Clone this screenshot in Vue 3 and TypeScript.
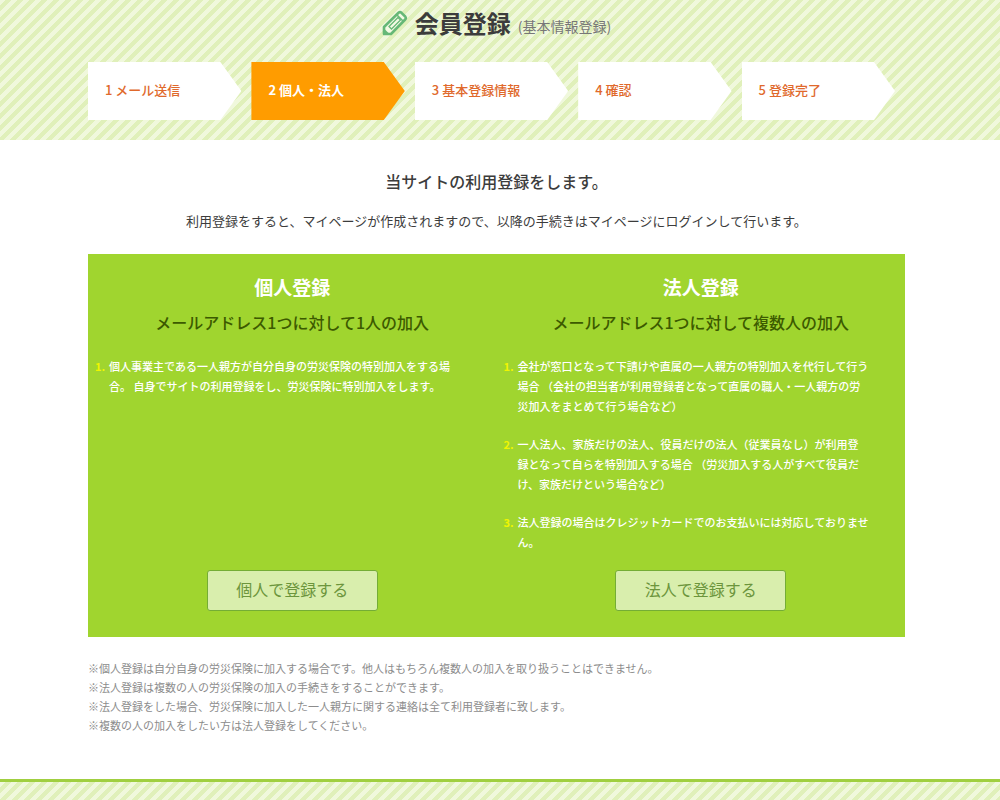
<script setup lang="ts">
interface Step {
  no: number
  label: string
}
interface Plan {
  title: string
  summary: string
  notes: string[]
  action: string
}

const current = 2
const steps: Step[] = [
  { no: 1, label: 'メール送信' },
  { no: 2, label: '個人・法人' },
  { no: 3, label: '基本登録情報' },
  { no: 4, label: '確認' },
  { no: 5, label: '登録完了' },
]

const plans: Plan[] = [
  {
    title: '個人登録',
    summary: 'メールアドレス1つに対して1人の加入',
    notes: [
      '個人事業主である一人親方が自分自身の労災保険の特別加入をする場\n合。 自身でサイトの利用登録をし、労災保険に特別加入をします。',
    ],
    action: '個人で登録する',
  },
  {
    title: '法人登録',
    summary: 'メールアドレス1つに対して複数人の加入',
    notes: [
      '会社が窓口となって下請けや直属の一人親方の特別加入を代行して行う\n場合 （会社の担当者が利用登録者となって直属の職人・一人親方の労\n災加入をまとめて行う場合など）',
      '一人法人、家族だけの法人、役員だけの法人（従業員なし）が利用登\n録となって自らを特別加入する場合 （労災加入する人がすべて役員だ\nけ、家族だけという場合など）',
      '法人登録の場合はクレジットカードでのお支払いには対応しておりませ\nん。',
    ],
    action: '法人で登録する',
  },
]

const remarks: string[] = [
  '※個人登録は自分自身の労災保険に加入する場合です。他人はもちろん複数人の加入を取り扱うことはできません。',
  '※法人登録は複数の人の労災保険の加入の手続きをすることができます。',
  '※法人登録をした場合、労災保険に加入した一人親方に関する連絡は全て利用登録者に致します。',
  '※複数の人の加入をしたい方は法人登録をしてください。',
]
</script>

<template>
  <div class="page">
    <header class="hero striped">
      <h1 class="title">
        <svg class="pencil" viewBox="0 0 26 26" aria-hidden="true">
          <path d="M2 24V17L16.500 2.800Q18 1.500 19.500 2.800L23.200 6.500Q24.500 8 23.200 9.500L9 24Z" fill="#f3fae4" stroke="#66b877" stroke-width="2.600" stroke-linejoin="round" />
          <path d="M2 18.500L7.500 24H2Z" fill="#66b877" />
          <path d="M7 16.500L9.500 19L18.500 10L16 7.500Z" fill="none" stroke="#66b877" stroke-width="1.300" />
          <path d="M15 5L21 11" fill="none" stroke="#66b877" stroke-width="1.600" />
        </svg>
        <span>会員登録</span>
        <small>(基本情報登録)</small>
      </h1>
      <ol class="steps">
        <li v-for="s in steps" :key="s.no" class="step" :class="{ active: s.no === current }">
          {{ s.no }} {{ s.label }}
        </li>
      </ol>
    </header>

    <main class="content">
      <h2 class="lead">当サイトの利用登録をします。</h2>
      <p class="intro">利用登録をすると、マイページが作成されますので、以降の手続きはマイページにログインして行います。</p>

      <div class="plans">
        <section v-for="p in plans" :key="p.title" class="plan">
          <h3>{{ p.title }}</h3>
          <p class="summary">{{ p.summary }}</p>
          <ol class="notes">
            <li v-for="(n, i) in p.notes" :key="i">
              <span class="num">{{ i + 1 }}.</span>
              <span class="note">{{ n }}</span>
            </li>
          </ol>
          <button type="button">{{ p.action }}</button>
        </section>
      </div>

      <div class="remarks">
        <p v-for="r in remarks" :key="r">{{ r }}</p>
      </div>
    </main>

    <footer class="footer striped"></footer>
  </div>
</template>

<style>
body {
  background: #fff;
}
</style>

<style scoped>
.page {
  display: flex;
  flex-direction: column;
  min-height: 100vh;
  overflow: hidden;
  font-family: "Noto Sans CJK JP", sans-serif;
  font-size: 13px;
  color: #3c3c3c;
}
h1, h2, h3, p, ol {
  margin: 0;
  padding: 0;
}
ol {
  list-style: none;
}
.striped {
  background: linear-gradient(135deg, #f0f8dc 25%, #e0f0ba 25% 50%, #f0f8dc 50% 75%, #e0f0ba 75%) 0 0 / 12px 12px;
}
.hero {
  padding: 4px 95px 20px 88px;
}
.title {
  display: flex;
  justify-content: center;
  align-items: center;
  height: 38px;
  margin-bottom: 20px;
  font-size: 24px;
  line-height: 38px;
  font-weight: 700;
}
.pencil {
  width: 26px;
  height: 26px;
  margin-right: 7px;
}
.title small {
  margin: 6px 0 0 7px;
  font-size: 14px;
  line-height: 20px;
  font-weight: 400;
  color: #777;
}
.steps {
  display: grid;
  grid-template-columns: repeat(5, 1fr);
}
.step {
  height: 58px;
  margin-right: 10px;
  padding: 0 17px;
  box-sizing: border-box;
  line-height: 56px;
  font-weight: 500;
  color: #e0692c;
  background: #fff;
  clip-path: polygon(0 0, calc(100% - 21px) 0, 100% 50%, calc(100% - 21px) 100%, 0 100%);
}
.step.active {
  color: #fff;
  font-weight: 700;
  background: #ff9c00;
}
.content {
  flex: 1;
  padding: 29px 95px 40px 88px;
}
.lead {
  font-size: 16px;
  line-height: 24px;
  font-weight: 500;
  text-align: center;
}
.intro {
  margin: 17px 0 22px;
  line-height: 22px;
  text-align: center;
}
.plans {
  display: grid;
  grid-template-columns: 1fr 1fr;
  background: #a0d52f;
}
.plan {
  display: flex;
  flex-direction: column;
  align-items: center;
  padding: 19px 7px 26px;
}
.plan h3 {
  font-size: 19px;
  line-height: 28px;
  font-weight: 700;
  color: #fff;
}
.summary {
  margin: 9px 0 22px;
  font-size: 16px;
  line-height: 24px;
  font-weight: 500;
  color: #3c5a00;
}
.notes {
  align-self: stretch;
  margin-bottom: 18px;
  font-size: 11px;
  line-height: 20px;
  font-weight: 500;
  color: #fff;
}
.notes li {
  display: flex;
  gap: 4px;
}
.notes li + li {
  margin-top: 18px;
}
.num {
  flex: none;
  color: #f0f500;
  font-weight: 700;
}
.note {
  white-space: pre-line;
}
.plan button {
  margin-top: auto;
  width: 171px;
  height: 41px;
  padding: 0 0 3px;
  border: 1px solid #74ad35;
  border-radius: 3px;
  background: #d9eead;
  color: #6c953c;
  font-family: inherit;
  font-size: 16px;
  font-weight: 400;
}
.remarks {
  margin-top: 22px;
  font-size: 11px;
  line-height: 19px;
  color: #8c8c8c;
}
.footer {
  min-height: 18px;
  border-top: 3px solid #a0cf40;
}
</style>
